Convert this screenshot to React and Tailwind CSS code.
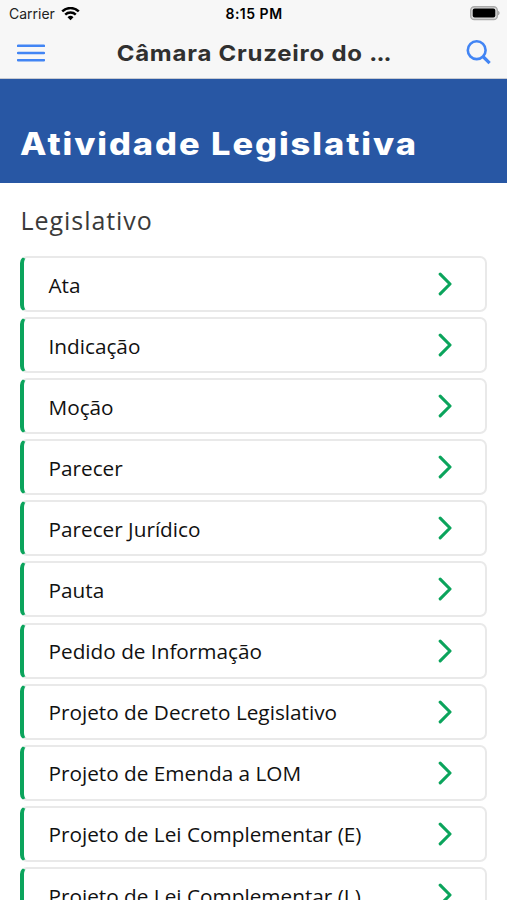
import React from "react";

const items = [
  "Ata",
  "Indicação",
  "Moção",
  "Parecer",
  "Parecer Jurídico",
  "Pauta",
  "Pedido de Informação",
  "Projeto de Decreto Legislativo",
  "Projeto de Emenda a LOM",
  "Projeto de Lei Complementar (E)",
  "Projeto de Lei Complementar (L)",
];

function StatusBar() {
  return (
    <div className="grid h-[27px] grid-cols-3 items-center pr-[7px] pl-[9px] font-['Inter',sans-serif] text-black">
      <div className="flex items-center gap-[6px] text-[14px] leading-none">
        <span className="w-[46px] text-[#222]">Carrier</span>
        <svg className="h-[14px] w-[19px]" viewBox="0 0 19 14" fill="none">
          <path d="M1.2 4.4a12 12 0 0 1 16.6 0" stroke="currentColor" strokeWidth="2.5" />
          <path d="M4.2 7.7a7.6 7.6 0 0 1 10.6 0" stroke="currentColor" strokeWidth="2.4" />
          <path d="M6.5 10.2a4.3 4.3 0 0 1 6 0L9.5 13.3z" fill="currentColor" />
        </svg>
      </div>
      <div className="pt-px pr-px text-center text-[14px] leading-none font-semibold tracking-[0.5px] whitespace-nowrap">
        8:15 PM
      </div>
      <svg className="h-[15px] w-[31px] justify-self-end" viewBox="0 0 31 15">
        <rect x="1.7" y="0.7" width="26.6" height="12.8" rx="3.6" fill="#dcdcdc" stroke="#aaa" strokeWidth="1.4" />
        <rect x="3.7" y="2.6" width="22.6" height="9" rx="2" fill="#000" />
        <path d="M29 4.7c2.2 .8 2.2 3.8 0 4.6z" fill="#aaa" />
      </svg>
    </div>
  );
}

function Toolbar() {
  return (
    <div className="flex h-[52px] items-center justify-between border-b border-[#c8cbd2] pr-[16px] pl-[17px]">
      <svg className="h-[18px] w-[28px] text-[#4285f4]" viewBox="0 0 28 18">
        <path d="M1 1.8h26M1 9h26M1 16.2h26" stroke="currentColor" strokeWidth="2.5" strokeLinecap="round" />
      </svg>
      <h1 className="-ml-[4px] scale-x-[1.09] font-['Inter',sans-serif] text-[22px] leading-none font-bold tracking-[0.7px] whitespace-nowrap text-[#303030]">
        <span>Câmara Cruzeiro do</span>
        <span className="ml-[6px] tracking-[-0.8px]">...</span>
      </h1>
      <svg className="h-[25px] w-[25px] text-[#4285f4]" viewBox="0 0 25 25" fill="none">
        <circle cx="10.7" cy="10.2" r="8.9" stroke="currentColor" strokeWidth="2.6" />
        <path d="M17 16.5l6.6 6.6" stroke="currentColor" strokeWidth="3.2" />
      </svg>
    </div>
  );
}

function ListItem({ label }) {
  return (
    <a
      href="#"
      className="flex h-[56px] shrink-0 items-center justify-between rounded-[7px] border-2 border-l-4 border-[#e9e9e9] border-l-[#0ba45c] bg-white pr-[33px] pl-[24.5px]"
    >
      <span className="pt-[2px] text-[20.75px] leading-none whitespace-nowrap text-[#111]">{label}</span>
      <svg className="h-[24px] w-[14px] text-[#0ba45c]" viewBox="0 0 14 24" fill="none">
        <path
          d="M2.2 2.2L12 12 2.2 21.8"
          stroke="currentColor"
          strokeWidth="3.1"
          strokeLinecap="round"
          strokeLinejoin="round"
        />
      </svg>
    </a>
  );
}

export default function App() {
  return (
    <div className="flex h-[900px] w-[507px] flex-col overflow-hidden bg-white font-['Open_Sans',sans-serif]">
      <header className="shrink-0 bg-[#f7f7f7]">
        <StatusBar />
        <Toolbar />
      </header>

      <div className="h-[104px] shrink-0 bg-[#2857a4] pt-[45px] pl-[20px]">
        <h2 className="origin-left scale-x-[1.11] font-['Inter',sans-serif] text-[31px] leading-[40px] font-extrabold tracking-[1.75px] whitespace-nowrap text-white">
          Atividade Legislativa
        </h2>
      </div>

      <main className="px-5 pt-[19px]">
        <h3 className="mb-[18px] pl-[0.5px] text-[25px] leading-[36px] tracking-[0.95px] text-[#3a3a3a]">
          Legislativo
        </h3>
        <div className="flex flex-col gap-[5.1px]">
          {items.map((label) => (
            <ListItem key={label} label={label} />
          ))}
        </div>
      </main>
    </div>
  );
}
